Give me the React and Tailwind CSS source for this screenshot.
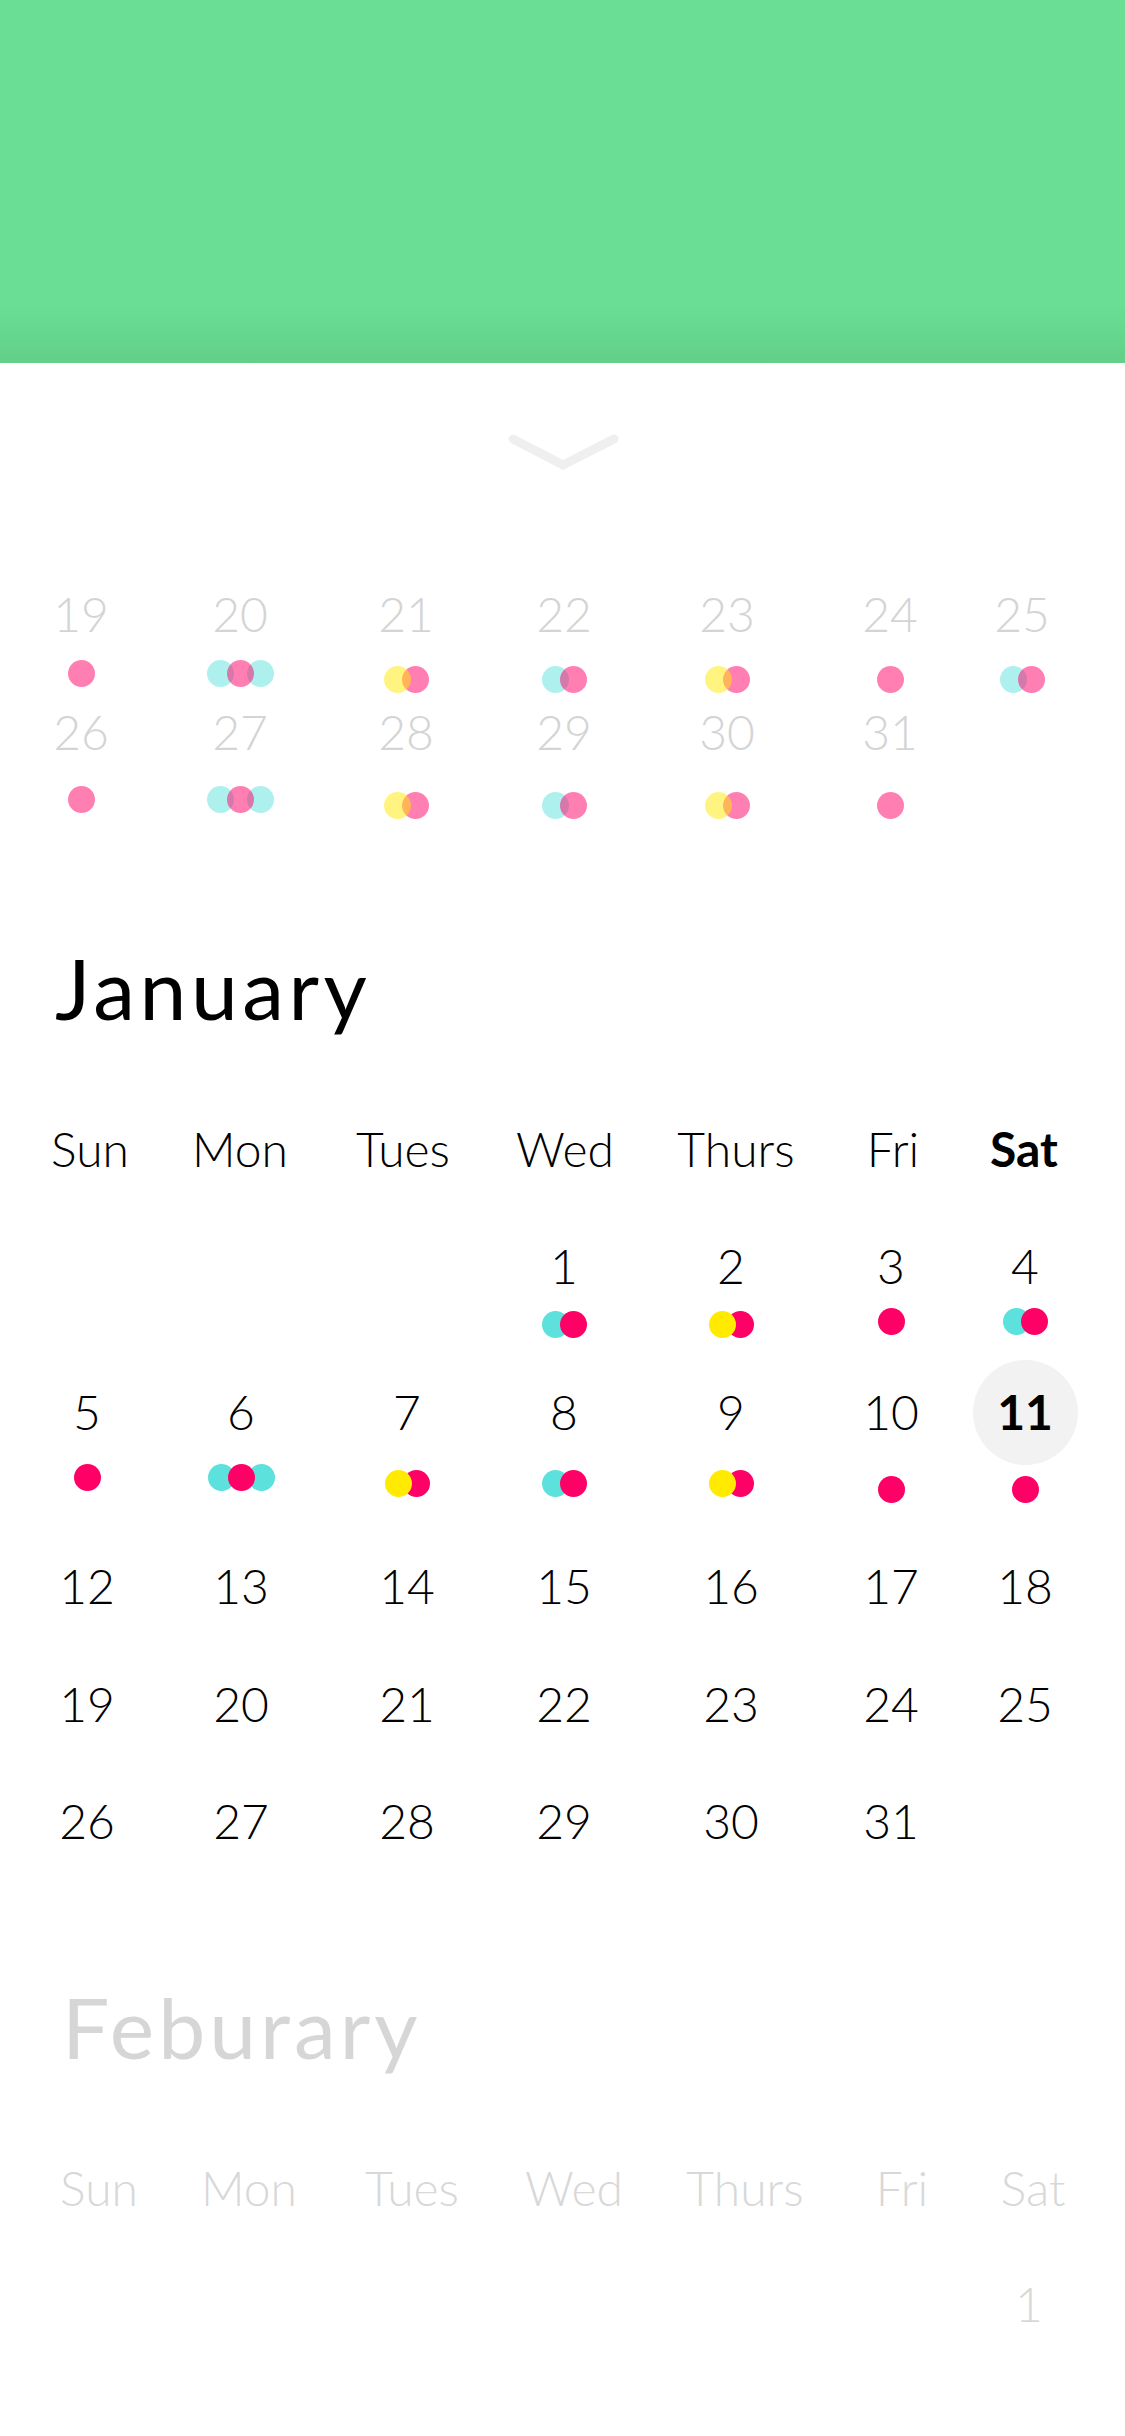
import React from "react";

const GRID = "grid grid-cols-[134px_174px_158px_156px_178px_142px_126px] items-start";
const HGRID = "grid grid-cols-[140px_160px_166px_158px_184px_130px_132px] items-start";
const DGRID = "grid grid-cols-[122px_196px_136px_180px_146px_180px_84px] items-start";
const FONT = "[font-family:Lato,'Noto_Sans',sans-serif]";

function Dot({ color, faded, extra = "" }) {
  const colors = {
    c: "bg-[#5ce1dc]",
    p: "bg-[#ff0066]",
    y: "bg-[#ffea00]",
  };
  return (
    <span
      className={`block w-[27px] h-[27px] rounded-full ${colors[color]} ${faded ? "opacity-50" : ""} ${extra}`}
    />
  );
}

function Dots({ kind, faded, mt }) {
  if (!kind) return null;
  let inner;
  if (kind === "p") inner = <Dot color="p" faded={faded} />;
  if (kind === "cp")
    inner = (
      <>
        <Dot color="c" faded={faded} />
        <Dot color="p" faded={faded} extra="-ml-[9px]" />
      </>
    );
  if (kind === "yp")
    inner = (
      <>
        <Dot color="y" faded={faded} extra="relative z-10" />
        <Dot color="p" faded={faded} extra="-ml-[9px]" />
      </>
    );
  if (kind === "cpc")
    inner = (
      <>
        <Dot color="c" faded={faded} />
        <Dot color="p" faded={faded} extra="-ml-[7px] relative z-10" />
        <Dot color="c" faded={faded} extra="-ml-[7px]" />
      </>
    );
  return <div className={`flex ${mt}`}>{inner}</div>;
}

function Day({ n, kind, mt, faded, today, color = "text-black" }) {
  return (
    <div className="flex flex-col items-center">
      {today ? (
        <span className="flex items-center justify-center w-[105px] h-[105px] -my-[28.5px] rounded-full bg-[#f2f2f2] text-[48px] leading-[48px] font-bold text-black">
          {n}
        </span>
      ) : (
        <span className={`h-[48px] text-[48px] leading-[48px] font-light ${color}`}>{n}</span>
      )}
      <Dots kind={kind} faded={faded} mt={mt} />
    </div>
  );
}

function Row({ days, h, faded, color, grid = GRID }) {
  return (
    <div className={`${grid} ${h}`}>
      {days.map((d, i) =>
        d ? <Day key={i} {...d} faded={faded} color={color} /> : <div key={i} />
      )}
    </div>
  );
}

const HEAD = ["Sun", "Mon", "Tues", "Wed", "Thurs", "Fri", "Sat"];

export default function App() {
  const dec1 = [
    { n: 19, kind: "p", mt: "mt-[22px]" },
    { n: 20, kind: "cpc", mt: "mt-[22px]" },
    { n: 21, kind: "yp", mt: "mt-[28px]" },
    { n: 22, kind: "cp", mt: "mt-[28px]" },
    { n: 23, kind: "yp", mt: "mt-[28px]" },
    { n: 24, kind: "p", mt: "mt-[28px]" },
    { n: 25, kind: "cp", mt: "mt-[28px]" },
  ];
  const dec2 = [
    { n: 26, kind: "p", mt: "mt-[30px]" },
    { n: 27, kind: "cpc", mt: "mt-[30px]" },
    { n: 28, kind: "yp", mt: "mt-[36px]" },
    { n: 29, kind: "cp", mt: "mt-[36px]" },
    { n: 30, kind: "yp", mt: "mt-[36px]" },
    { n: 31, kind: "p", mt: "mt-[36px]" },
    null,
  ];
  const jan1 = [
    null,
    null,
    null,
    { n: 1, kind: "cp", mt: "mt-[21px]" },
    { n: 2, kind: "yp", mt: "mt-[21px]" },
    { n: 3, kind: "p", mt: "mt-[18px]" },
    { n: 4, kind: "cp", mt: "mt-[18px]" },
  ];
  const jan2 = [
    { n: 5, kind: "p", mt: "mt-[28px]" },
    { n: 6, kind: "cpc", mt: "mt-[28px]" },
    { n: 7, kind: "yp", mt: "mt-[34px]" },
    { n: 8, kind: "cp", mt: "mt-[34px]" },
    { n: 9, kind: "yp", mt: "mt-[34px]" },
    { n: 10, kind: "p", mt: "mt-[40px]" },
    { n: 11, kind: "p", mt: "mt-[40px]", today: true },
  ];
  const plain = (a, b) => {
    const r = [];
    for (let i = a; i <= b; i++) r.push({ n: i });
    while (r.length < 7) r.push(null);
    return r;
  };

  return (
    <div className={`w-[1125px] min-h-[2436px] bg-white overflow-hidden ${FONT}`}>
      {/* green header */}
      <div className="h-[363px] bg-[linear-gradient(180deg,#6ade95_0%,#6ade95_84%,#63cf89_100%)]" />

      {/* chevron */}
      <div className="flex justify-center pt-[67px]">
        <svg width="120" height="45" viewBox="0 0 120 45">
          <polyline
            points="10,9 60,35 111,9"
            fill="none"
            stroke="#efefef"
            strokeWidth="9"
            strokeLinecap="round"
            strokeLinejoin="miter"
          />
        </svg>
      </div>

      {/* December tail */}
      <div className="mt-[115px] pl-[20px]">
        <Row days={dec1} h="h-[118px]" faded color="text-[#d4d4d4]" grid={DGRID} />
        <Row days={dec2} h="h-[118px]" faded color="text-[#d4d4d4]" grid={DGRID} />
      </div>

      {/* January */}
      <h1 className="mt-[120px] pl-[55px] text-[84px] leading-[84px] font-normal tracking-[4.5px] text-black">
        January
      </h1>
      <div className={`${HGRID} mt-[95px] pl-[20px]`}>
        {HEAD.map((h) => (
          <div
            key={h}
            className={`text-center text-[48px] leading-[48px] text-black ${h === "Sat" ? "font-bold" : "font-light"}`}
          >
            {h}
          </div>
        ))}
      </div>
      <div className="mt-[69px] pl-[20px]">
        <Row days={jan1} h="h-[146px]" />
        <Row days={jan2} h="h-[174px]" />
        <Row days={plain(12, 18)} h="h-[118px]" />
        <Row days={plain(19, 25)} h="h-[117px]" />
        <Row days={plain(26, 31)} h="h-[48px]" />
      </div>

      {/* February */}
      <h2 className="mt-[140px] pl-[62px] text-[84px] leading-[84px] font-normal tracking-[4px] text-[#d6d6d6]">
        Feburary
      </h2>
      <div className={`${HGRID} mt-[95px] pl-[29px]`}>
        {HEAD.map((h) => (
          <div key={h} className="text-center text-[48px] leading-[48px] font-light text-[#d8d8d8]">
            {h}
          </div>
        ))}
      </div>
      <div className="mt-[68px] pl-[24px]">
        <Row days={[null, null, null, null, null, null, { n: 1 }]} h="h-[48px]" color="text-[#d8d8d8]" />
      </div>
    </div>
  );
}
